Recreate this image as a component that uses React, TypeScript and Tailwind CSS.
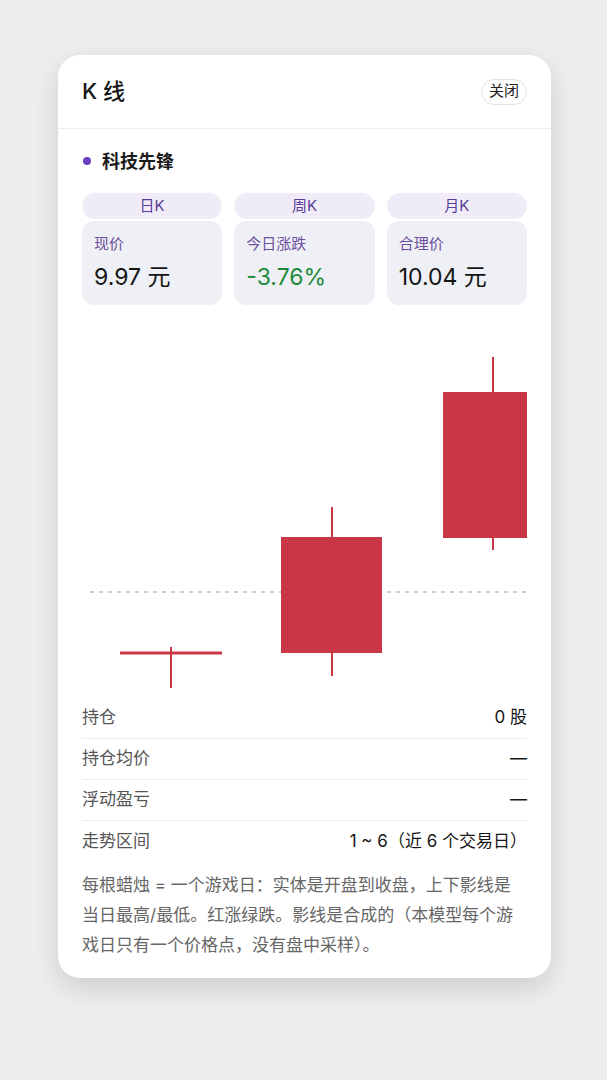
import React from "react";

// ─── Data ─────────────────────────────────────────────────────────────────────
const PERIODS = [
  { tab: "日K", label: "现价", value: "9.97 元", tone: "text-[#141414]" },
  { tab: "周K", label: "今日涨跌", value: "-3.76%", tone: "text-[#1f8a3a]" },
  { tab: "月K", label: "合理价", value: "10.04 元", tone: "text-[#141414]" },
];

const ROWS = [
  { label: "持仓", value: "0 股" },
  { label: "持仓均价", value: "—" },
  { label: "浮动盈亏", value: "—" },
  { label: "走势区间", value: "1 ~ 6（近 6 个交易日）" },
];

const RED = "#c93747";

// ─── Candles ──────────────────────────────────────────────────────────────────
function CandleChart() {
  return (
    <svg width="445" height="393" viewBox="0 0 445 393" className="block">
      <line x1="8" y1="287" x2="445" y2="287" stroke="#9c9c9c" strokeWidth="1" strokeDasharray="4 5" />

      {/* day 1: flat open/close */}
      <line x1="89" y1="342" x2="89" y2="383" stroke={RED} strokeWidth="2" />
      <line x1="38" y1="348" x2="140" y2="348" stroke={RED} strokeWidth="3" />

      {/* day 2 */}
      <line x1="250" y1="202" x2="250" y2="371" stroke={RED} strokeWidth="2" />
      <rect x="199" y="232" width="101" height="116" fill={RED} />

      {/* day 3 */}
      <line x1="411" y1="52" x2="411" y2="245" stroke={RED} strokeWidth="2" />
      <rect x="361" y="87" width="84" height="146" fill={RED} />
    </svg>
  );
}

// ─── App ──────────────────────────────────────────────────────────────────────
export default function App() {
  return (
    <div
      className="min-h-[1080px] w-full bg-[#eceeef] pt-[55px]"
      style={{ fontFamily: 'Inter, "Noto Sans CJK SC", sans-serif' }}
    >
      <div className="ml-[58px] w-[493px] rounded-[22px] bg-white shadow-[0_10px_28px_rgba(0,0,0,0.14)]">
        {/* Header */}
        <div className="flex h-[74px] items-center justify-between border-b border-[#ededed] px-6">
          <h1 className="text-[22px] font-medium text-[#151515]">K 线</h1>
          <button className="flex h-[26px] items-center rounded-full border border-[#e3e3e3] bg-white px-[7px] text-[15px] text-[#222]">
            关闭
          </button>
        </div>

        <div className="px-6 pt-5">
          {/* Stock name */}
          <div className="flex h-6 items-center gap-[11px] pl-[1px]">
            <span className="h-2 w-2 rounded-full bg-[#6a3fc1]" />
            <span className="text-[18px] font-semibold text-[#1c1c1c]">科技先锋</span>
          </div>

          {/* Period tabs + stats */}
          <div className="mt-5 grid grid-cols-3 gap-3">
            {PERIODS.map((p) => (
              <div key={p.tab} className="flex flex-col gap-[2px]">
                <div className="flex h-[26px] items-center justify-center rounded-[13px] bg-[#efebf7] text-[15px] text-[#5b3e99]">
                  {p.tab}
                </div>
                <div className="h-[84px] rounded-xl bg-[#eef0f5] px-3 pt-[12px]">
                  <p className="text-[15px] leading-[22px] text-[#6b4fa0]">{p.label}</p>
                  <p className={`mt-[10px] text-[23px] leading-[24px] ${p.tone}`}>{p.value}</p>
                </div>
              </div>
            ))}
          </div>

          {/* Chart */}
          <CandleChart />

          {/* Position rows */}
          <div>
            {ROWS.map((r, i) => (
              <div
                key={r.label}
                className={`flex h-[41px] items-center justify-between text-[17px] ${
                  i < ROWS.length - 1 ? "border-b border-[#ececec]" : ""
                }`}
              >
                <span className="text-[#555]">{r.label}</span>
                <span className="text-[#161616]">{r.value}</span>
              </div>
            ))}
          </div>

          <p className="pb-[18px] pt-[8px] text-[17px] leading-[30px] text-[#666]">
            每根蜡烛 = 一个游戏日：实体是开盘到收盘，上下影线是当日最高/最低。红涨绿跌。影线是合成的（本模型每个游戏日只有一个价格点，没有盘中采样）。
          </p>
        </div>
      </div>
    </div>
  );
}
